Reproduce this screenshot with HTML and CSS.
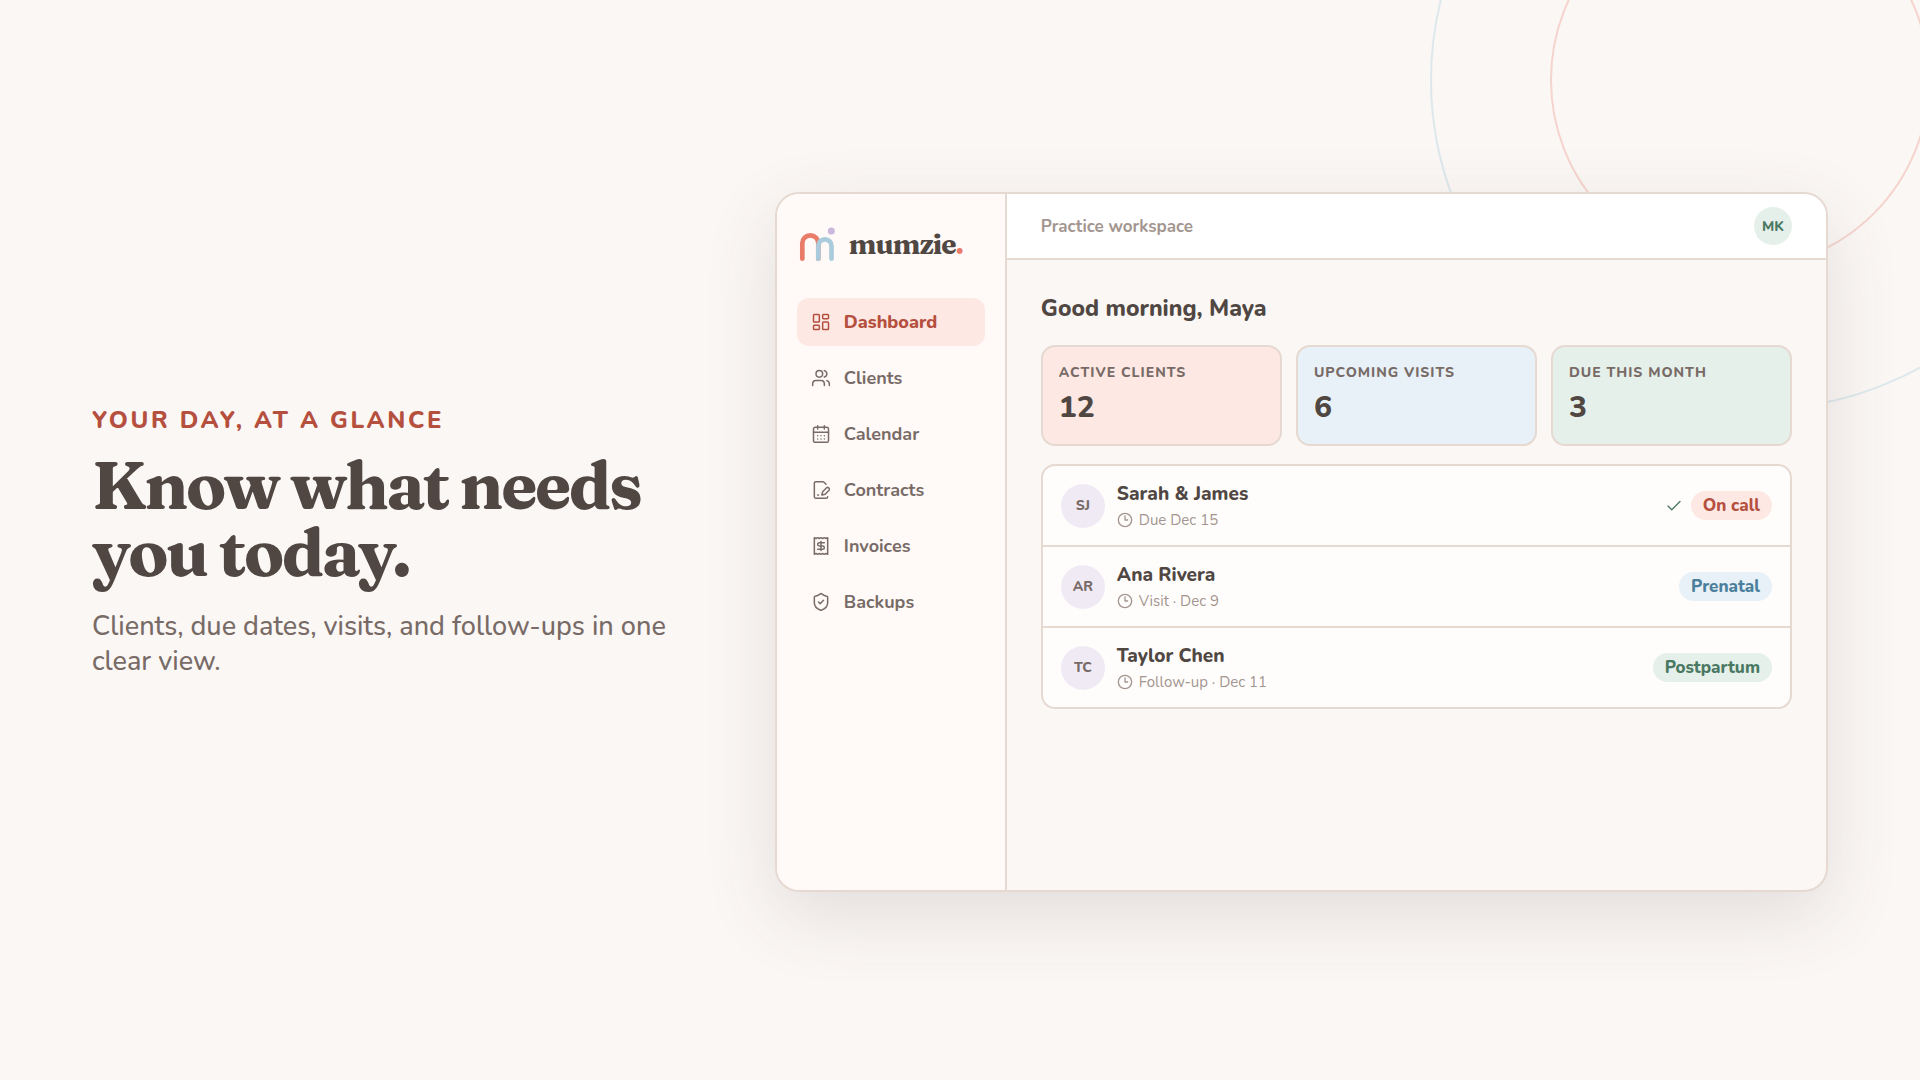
FILE: index.html
```html
<!DOCTYPE html>
<html lang="en">
<head>
<meta charset="utf-8">
<title>mumzie</title>
<link rel="stylesheet" href="styles.css">
</head>
<body>
<main class="page">
  <div class="ring ring-blue"></div>
  <div class="ring ring-coral"></div>

  <section class="copy">
    <p class="eyebrow">Your day, at a glance</p>
    <h1 class="headline">Know what needs you today.</h1>
    <p class="lede">Clients, due dates, visits, and follow-ups in one clear view.</p>
  </section>

  <section class="window">
    <aside class="sidebar">
      <a class="brand" href="#">
        <svg class="brand-mark" viewBox="0 0 36 36" fill="none" stroke-width="4.700" stroke-linecap="round">
          <path stroke="#e87c69" d="M3.300 32.700V17.300a8 8 0 0 1 16 0v15.400"/>
          <path stroke="#a9cbdb" d="M19.300 32.700V19.900a6.600 6.600 0 0 1 13.200 0v12.800"/>
          <circle cx="32.300" cy="5" r="3.500" fill="#c9b8dc"/>
        </svg>
        <span class="brand-name">mumzie<span class="brand-dot">.</span></span>
      </a>
      <nav class="nav">
        <a class="nav-item nav-item-active" href="#">
          <svg class="icon" viewBox="0 0 24 24"><rect x="3" y="3" width="7" height="9" rx="1"/><rect x="14" y="3" width="7" height="5" rx="1"/><rect x="14" y="12" width="7" height="9" rx="1"/><rect x="3" y="16" width="7" height="5" rx="1"/></svg>
          Dashboard</a>
        <a class="nav-item" href="#">
          <svg class="icon" viewBox="0 0 24 24"><path d="M2 21v-2a4 4 0 0 1 4-4h6a4 4 0 0 1 4 4v2"/><circle cx="10" cy="7" r="4"/><path d="M16 3.130a4 4 0 0 1 0 7.750M22 21v-2a4 4 0 0 0-3-3.870"/></svg>
          Clients</a>
        <a class="nav-item" href="#">
          <svg class="icon" viewBox="0 0 24 24"><rect x="3" y="4" width="18" height="18" rx="2"/><path d="M8 2v4M16 2v4M3 10h18M8 14h.01M12 14h.01M16 14h.01M8 18h.01M12 18h.01M16 18h.01"/></svg>
          Calendar</a>
        <a class="nav-item" href="#">
          <svg class="icon" viewBox="0 0 24 24"><path d="M18 5l-2.400-2.400A2 2 0 0 0 14.200 2H6a2 2 0 0 0-2 2v16a2 2 0 0 0 2 2h12a2 2 0 0 0 2-2M8 18h1"/><path d="M18.400 9.600a2 2 0 0 1 3 3L17 17l-4 1 1-4Z"/></svg>
          Contracts</a>
        <a class="nav-item" href="#">
          <svg class="icon" viewBox="0 0 24 24"><path d="M4 2v20l2-1 2 1 2-1 2 1 2-1 2 1 2-1 2 1V2l-2 1-2-1-2 1-2-1-2 1-2-1-2 1Z"/><path d="M16 8h-6a2 2 0 1 0 0 4h4a2 2 0 1 1 0 4H8M12 17.500v-11"/></svg>
          Invoices</a>
        <a class="nav-item" href="#">
          <svg class="icon" viewBox="0 0 24 24"><path d="M20 13c0 5-3.500 7.500-7.660 8.950a1 1 0 0 1-.67-.01C7.500 20.500 4 18 4 13V6a1 1 0 0 1 1-1c2 0 4.500-1.200 6.240-2.720a1.170 1.170 0 0 1 1.520 0C14.510 3.810 17 5 19 5a1 1 0 0 1 1 1Z"/><path d="m9 12 2 2 4-4"/></svg>
          Backups</a>
      </nav>
    </aside>

    <div class="workspace">
      <header class="topbar">
        <span class="topbar-title">Practice workspace</span>
        <span class="avatar avatar-user">MK</span>
      </header>
      <div class="content">
        <h2 class="greeting">Good morning, Maya</h2>
        <div class="stats">
          <div class="stat stat-coral"><span class="stat-label">Active clients</span><strong class="stat-value">12</strong></div>
          <div class="stat stat-blue"><span class="stat-label">Upcoming visits</span><strong class="stat-value">6</strong></div>
          <div class="stat stat-green"><span class="stat-label">Due this month</span><strong class="stat-value">3</strong></div>
        </div>
        <ul class="clients">
          <li class="client">
            <span class="avatar">SJ</span>
            <div class="client-info">
              <span class="client-name">Sarah &amp; James</span>
              <span class="client-meta"><svg class="icon icon-clock" viewBox="0 0 24 24"><circle cx="12" cy="12" r="10"/><path d="M12 6v6h4"/></svg>Due Dec 15</span>
            </div>
            <div class="client-status">
              <svg class="icon icon-check" viewBox="0 0 24 24"><path d="m4 12 5 5L20 6"/></svg>
              <span class="pill pill-coral">On call</span>
            </div>
          </li>
          <li class="client">
            <span class="avatar">AR</span>
            <div class="client-info">
              <span class="client-name">Ana Rivera</span>
              <span class="client-meta"><svg class="icon icon-clock" viewBox="0 0 24 24"><circle cx="12" cy="12" r="10"/><path d="M12 6v6h4"/></svg>Visit · Dec 9</span>
            </div>
            <div class="client-status">
              <span class="pill pill-blue">Prenatal</span>
            </div>
          </li>
          <li class="client">
            <span class="avatar">TC</span>
            <div class="client-info">
              <span class="client-name">Taylor Chen</span>
              <span class="client-meta"><svg class="icon icon-clock" viewBox="0 0 24 24"><circle cx="12" cy="12" r="10"/><path d="M12 6v6h4"/></svg>Follow-up · Dec 11</span>
            </div>
            <div class="client-status">
              <span class="pill pill-green">Postpartum</span>
            </div>
          </li>
        </ul>
      </div>
    </div>
  </section>
</main>
</body>
</html>
```
FILE: styles.css
```css
:root {
  --ink: #504743;
  --ink-soft: #786b67;
  --ink-faint: #a3958f;
  --line: #e6d9d1;
  --cream: #fbf7f4;
  --coral: #b54f3e;
  --coral-soft: #fde8e3;
  --blue: #4b7f9c;
  --blue-soft: #e8f1f7;
  --green: #4a7862;
  --green-soft: #e5f0ea;
  --lilac-soft: #f0eaf5;
}

* { box-sizing: border-box; }

body {
  margin: 0;
  background: var(--cream);
  color: var(--ink);
  font-family: Nunito, Lato, sans-serif;
}

h1, h2, p, ul { margin: 0; padding: 0; }
a { color: inherit; text-decoration: none; }

.page {
  position: relative;
  overflow: hidden;
  min-height: 100vh;
  padding: 4px 92px 0;
  display: grid;
  grid-template-columns: 58fr 100fr;
  gap: 72px;
  align-items: center;
}

.ring {
  position: absolute;
  border: 2px solid;
  border-radius: 50%;
}
.ring-blue { top: -250px; right: -170px; width: 660px; height: 660px; border-color: #dde8ed; }
.ring-coral { top: -110px; right: -10px; width: 380px; height: 380px; border-color: #f5d4ce; }

.copy { padding-bottom: 2px; }
.eyebrow {
  margin-bottom: 16px;
  color: var(--coral);
  font-size: 24px;
  line-height: 32px;
  font-weight: 800;
  letter-spacing: 0.11em;
  text-transform: uppercase;
}
.headline {
  margin-bottom: 23px;
  font-family: Fraunces, "Liberation Serif", serif;
  font-size: 66px;
  line-height: 67px;
  font-weight: 700;
  letter-spacing: -0.035em;
}
.lede {
  color: var(--ink-soft);
  font-size: 27px;
  line-height: 35px;
  font-weight: 500;
}

.window {
  position: relative;
  display: flex;
  min-height: 700px;
  border: 2px solid var(--line);
  border-radius: 24px;
  overflow: hidden;
  background: var(--cream);
  box-shadow: 0 24px 72px rgba(76, 72, 68, 0.14);
}

.sidebar {
  flex: 0 0 230px;
  padding: 30px 20px;
  border-right: 2px solid var(--line);
  background: #fffaf7;
}
.brand {
  display: flex;
  align-items: center;
  gap: 14px;
  height: 40px;
  margin-bottom: 34px;
  padding-left: 2px;
}
.brand-mark { width: 36px; height: 36px; }
.brand-name {
  font-family: Fraunces, "Liberation Serif", serif;
  font-size: 28px;
  line-height: 38px;
  font-weight: 700;
  letter-spacing: -0.035em;
}
.brand-dot { color: #e87c69; }

.nav { display: grid; gap: 8px; }
.nav-item {
  display: flex;
  align-items: center;
  gap: 13px;
  height: 48px;
  padding: 0 14px;
  border-radius: 12px;
  color: var(--ink-soft);
  font-size: 18px;
  font-weight: 700;
}
.nav-item-active { background: var(--coral-soft); color: var(--coral); font-weight: 800; }

.icon {
  flex: none;
  width: 20px;
  height: 20px;
  fill: none;
  stroke: currentColor;
  stroke-width: 1.8;
  stroke-linecap: round;
  stroke-linejoin: round;
}

.workspace { flex: 1; min-width: 0; }
.topbar {
  display: flex;
  align-items: center;
  justify-content: space-between;
  height: 66px;
  padding: 0 34px;
  border-bottom: 2px solid var(--line);
  background: #fff;
}
.topbar-title { color: var(--ink-faint); font-size: 17px; font-weight: 700; }

.avatar {
  flex: none;
  display: grid;
  place-items: center;
  width: 44px;
  height: 44px;
  border-radius: 50%;
  background: var(--lilac-soft);
  color: var(--ink-soft);
  font-size: 14px;
  font-weight: 800;
}
.avatar-user { width: 38px; height: 38px; background: var(--green-soft); color: var(--green); }

.content { padding: 34px; }
.greeting {
  margin-bottom: 21px;
  font-size: 23px;
  line-height: 30px;
  font-weight: 800;
}

.stats {
  display: grid;
  grid-template-columns: repeat(3, 1fr);
  gap: 14px;
  margin-bottom: 18px;
}
.stat {
  display: flex;
  flex-direction: column;
  height: 101px;
  padding: 15px 16px 0;
  border: 2px solid var(--line);
  border-radius: 14px;
}
.stat-coral { background: var(--coral-soft); }
.stat-blue { background: var(--blue-soft); }
.stat-green { background: var(--green-soft); }
.stat-label {
  color: var(--ink-soft);
  font-size: 14px;
  line-height: 22px;
  font-weight: 800;
  letter-spacing: 0.07em;
  text-transform: uppercase;
}
.stat-value { font-size: 30px; line-height: 48px; font-weight: 800; }

.clients {
  list-style: none;
  border: 2px solid var(--line);
  border-radius: 14px;
  background: #fffdfc;
}
.client {
  display: flex;
  align-items: center;
  gap: 12px;
  padding: 14px 18px;
}
.client + .client { border-top: 2px solid var(--line); }
.client-info { flex: 1; display: grid; gap: 1px; }
.client-name { font-size: 19px; line-height: 28px; font-weight: 800; }
.client-meta {
  display: flex;
  align-items: center;
  gap: 6px;
  color: var(--ink-faint);
  font-size: 15px;
  line-height: 22px;
}
.client-status { display: flex; align-items: center; gap: 8px; }
.icon-clock { width: 16px; height: 16px; stroke-width: 2; }
.icon-check { width: 18px; height: 18px; color: var(--green); }

.pill {
  padding: 0 12px;
  border-radius: 15px;
  font-size: 17px;
  line-height: 29px;
  font-weight: 800;
}
.pill-coral { background: var(--coral-soft); color: var(--coral); }
.pill-blue { background: var(--blue-soft); color: var(--blue); }
.pill-green { background: var(--green-soft); color: var(--green); }
```
